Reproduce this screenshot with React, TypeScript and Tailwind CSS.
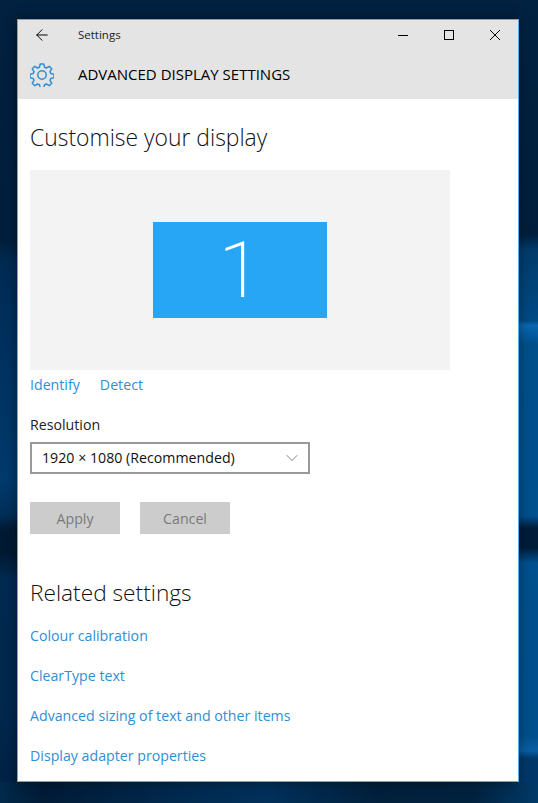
import React from 'react';
import { ArrowLeft, ChevronDown } from 'lucide-react';

const font = { fontFamily: '"Open Sans", "Noto Sans", sans-serif' };

const relatedLinks = [
  'Colour calibration',
  'ClearType text',
  'Advanced sizing of text and other items',
  'Display adapter properties',
];

const Wallpaper: React.FC<{ children: React.ReactNode }> = ({ children }) => (
  <div className="w-[538px] h-[803px] overflow-hidden pl-[17px] pt-[19px] bg-no-repeat [background-position:100%_0,0_100%,0_0] [background-size:19px_782px,100%_21px,100%_100%] bg-[linear-gradient(180deg,#012341_0%,#011f3d_30%,#013c6c_32%,#014a84_41%,#0a67b0_41.6%,#01508c_44%,#01508f_66%,#011d3a_67.5%,#011d3a_70%,#01508f_72%,#014f8c_94%,#0a5ea4_96%,#01386a_97%),linear-gradient(90deg,#012a4c_0%,#011b36_8%,#012a50_35%,#01305a_50%,#01203c_70%,#01223f_88%,#013a68_100%),linear-gradient(180deg,#02203f_0%,#011f3c_30%,#012a52_32.4%,#012f5c_40%,#013a6c_60%,#012f58_64%,#011a33_66%,#011a33_69%,#012a50_72%,#01274c_90%,#012040_100%)]">
    {children}
  </div>
);

// window buttons and the cog are drawn, they are thinner than the icon set
const TitleBar = () => (
  <div className="bg-[#e4e4e4] h-[79px] text-black">
    <div className="h-[30px] flex items-center">
      <ArrowLeft className="w-[18px] h-[18px] ml-[15px]" strokeWidth={1.3} />
      <span className="ml-[27px] text-[11.5px] text-[#222]">Settings</span>
      <div className="ml-auto flex items-center">
        <svg width="10" height="10" viewBox="0 0 10 10" className="mr-[36px]">
          <path d="M0 5.5H10" stroke="#000" strokeWidth="1" />
        </svg>
        <svg width="10" height="10" viewBox="0 0 10 10" className="mr-[36px]">
          <rect x="0.5" y="0.5" width="9" height="9" fill="none" stroke="#000" strokeWidth="1" />
        </svg>
        <svg width="10" height="10" viewBox="0 0 10 10" className="mr-[18px]">
          <path d="M0 0L10 10M10 0L0 10" stroke="#000" strokeWidth="1" />
        </svg>
      </div>
    </div>
    <div className="h-[49px] flex items-center">
      <svg width="24" height="24" viewBox="0 0 24 24" fill="none" stroke="#2f8fd3" strokeWidth="1.5" strokeLinejoin="round" className="ml-[12px]">
        <circle cx="12" cy="12" r="4.2" />
        <path d="M10.2 1h3.6l.7 3.2 1.9.8 2.8-1.7 2.5 2.5-1.7 2.8.8 1.9 3.2.7v3.6l-3.2.7-.8 1.9 1.7 2.8-2.5 2.5-2.8-1.7-1.9.8-.7 3.2h-3.6l-.7-3.2-1.9-.8-2.8 1.7-2.5-2.5 1.7-2.8-.8-1.9-3.2-.7v-3.6l3.2-.7.8-1.9-1.7-2.8 2.5-2.5 2.8 1.7 1.9-.8z" />
      </svg>
      <span className="ml-[24px] text-[15px] font-medium">ADVANCED DISPLAY SETTINGS</span>
    </div>
  </div>
);

export default function App() {
  return (
    <Wallpaper>
      <div style={font} className="w-[502px] h-[763px] border border-[#5aaee6] bg-white shadow-[0_0_12px_rgba(0,0,0,0.4)]">
        <TitleBar />
        <div className="pl-[12px]">
          <h1 className="mt-[21px] h-[36px] text-[22.9px] leading-[36px] font-light text-[#111]">Customise your display</h1>
          <div className="mt-[14px] w-[420px] h-[200px] bg-[#f3f3f3] flex items-center justify-center">
            <div className="w-[174px] h-[96px] bg-[#26a6f5] flex items-center justify-center text-white">
              <span style={{ fontFamily: 'Roboto, sans-serif' }} className="text-[78px] leading-none font-extralight pt-[2px]">1</span>
            </div>
          </div>
          <div className="mt-[4px] h-[22px] flex gap-[20px] text-[14.2px] leading-[22px] text-[#2f8fd3]">
            <span>Identify</span>
            <span>Detect</span>
          </div>
          <div className="mt-[18px] h-[22px] text-[14.2px] leading-[22px] text-[#222]">Resolution</div>
          <div className="mt-[6px] w-[280px] h-[32px] border-2 border-[#999] flex items-center pl-[10px] pr-[6px] text-[14.2px] text-[#111]">
            <span>1920 × 1080 (Recommended)</span>
            <ChevronDown className="ml-auto w-[20px] h-[20px] text-[#666]" strokeWidth={1} />
          </div>
          <div className="mt-[28px] flex gap-[20px]">
            <div className="w-[90px] h-[32px] pt-[2px] bg-[#cccccc] flex items-center justify-center text-[14.2px] text-[#7a7a7a]">Apply</div>
            <div className="w-[90px] h-[32px] pt-[2px] bg-[#cccccc] flex items-center justify-center text-[14.2px] text-[#7a7a7a]">Cancel</div>
          </div>
          <h2 className="mt-[42px] h-[34px] text-[22.7px] leading-[34px] font-light text-[#111]">Related settings</h2>
          <div className="mt-[15px] flex flex-col gap-[18px] text-[14.2px] leading-[22px] text-[#2f8fd3]">
            {relatedLinks.map((link) => (
              <span key={link}>{link}</span>
            ))}
          </div>
        </div>
      </div>
    </Wallpaper>
  );
}
